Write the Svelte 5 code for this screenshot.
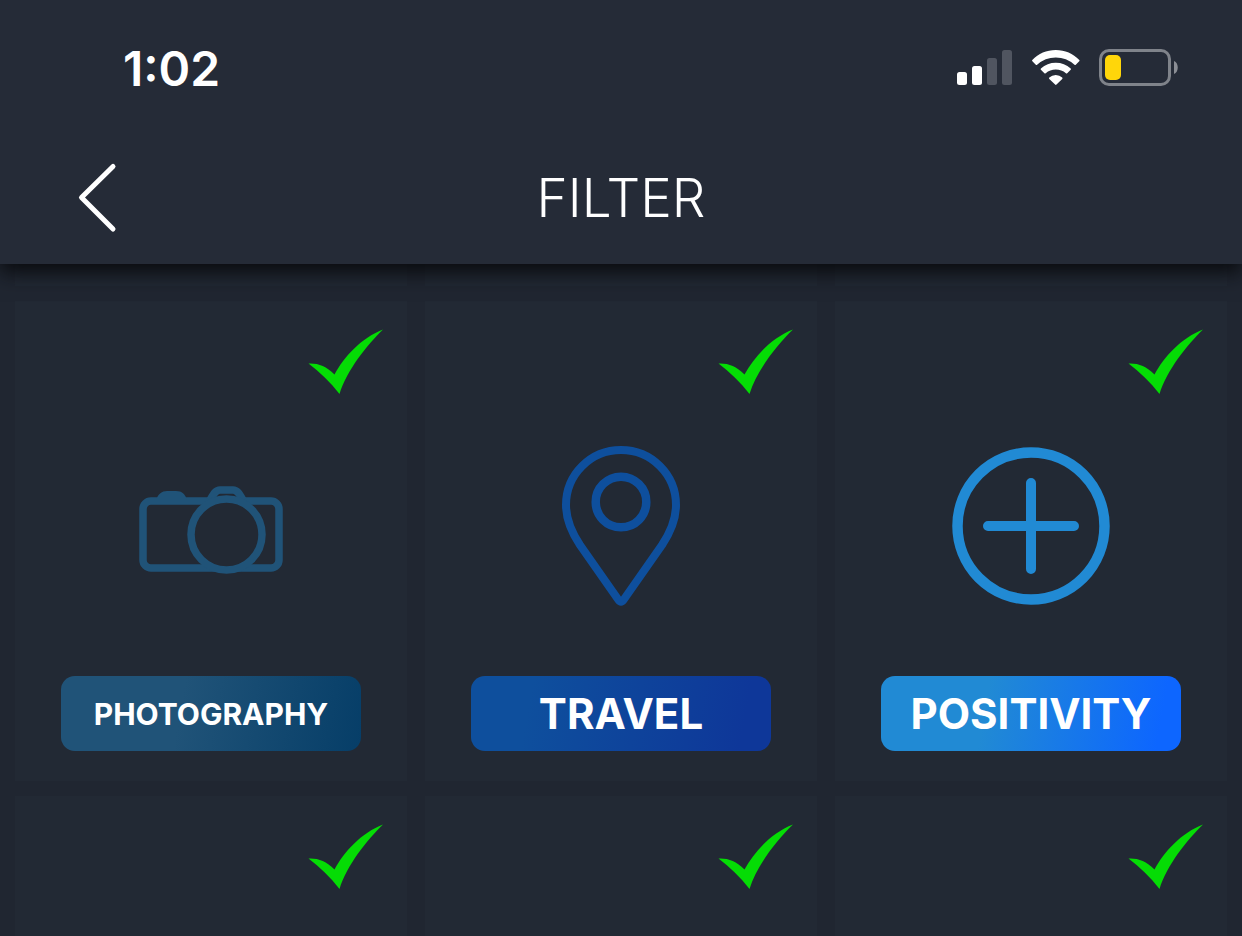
<script>
  const rows = [
    [
      { id: 'p1', tail: true },
      { id: 'p2', tail: true },
      { id: 'p3', tail: true }
    ],
    [
      { id: 'photography', label: 'PHOTOGRAPHY', checked: true },
      { id: 'travel', label: 'TRAVEL', checked: true },
      { id: 'positivity', label: 'POSITIVITY', checked: true }
    ],
    [
      { id: 'n1', checked: true },
      { id: 'n2', checked: true },
      { id: 'n3', checked: true }
    ]
  ];
  let cards = $state(rows.flat());
</script>

<div class="screen">
  <header>
    <div class="status">
      <time>1:02</time>
      <div class="indicators">
        <svg width="56" height="36" viewBox="0 0 56 36" aria-hidden="true">
          <rect x="0" y="22" width="10" height="13" rx="2.5" fill="#fff" />
          <rect x="15" y="16" width="10" height="19" rx="2.5" fill="#fff" />
          <rect x="30" y="8" width="10" height="27" rx="2.5" fill="#505560" />
          <rect x="45" y="0" width="10" height="35" rx="2.5" fill="#505560" />
        </svg>
        <svg width="48" height="36" viewBox="0 0 48 36" aria-hidden="true">
          <g fill="#fff">
            <path d="M0.3 10.1 C6.500 3.500 14.500 0 23.800 0 C33 0 41 3.500 47.300 10.100 Q47.800 10.700 47.200 11.300 L43.800 14.800 Q43.200 15.400 42.500 14.700 Q34.500 7.400 23.800 7.400 Q13 7.400 5.100 14.700 Q4.400 15.400 3.800 14.800 L.4 11.300 Q-.2 10.700 .3 10.1Z" />
            <path d="M8.9 18.4 Q15.2 12.7 23.8 12.7 Q32.4 12.7 38.7 18.4 Q39.3 19 38.7 19.7 L35.2 23.2 Q34.6 23.8 33.9 23.2 Q29.6 19.6 23.8 19.6 Q18 19.6 13.7 23.2 Q13 23.8 12.4 23.2 L8.9 19.7 Q8.3 19 8.9 18.4Z" />
            <path d="M17.3 27.6 Q20 24.9 23.8 24.9 Q27.6 24.9 30.2 27.6 Q30.9 28.3 30.2 28.9 L24.5 34.6 Q23.8 35.2 23.1 34.6 L17.3 28.9 Q16.6 28.3 17.3 27.6Z" />
          </g>
        </svg>
        <svg width="80" height="38" viewBox="0 0 80 38" aria-hidden="true">
          <rect x="1.5" y="1.5" width="69" height="34" rx="8.5" fill="none" stroke="#7f838a" stroke-width="3" />
          <rect x="6" y="6" width="16" height="25" rx="5" fill="#ffd60a" />
          <path d="M75 12 C80 14 80 23 75 25Z" fill="#8b8e95" />
        </svg>
      </div>
    </div>
    <div class="bar">
      <button class="back" aria-label="Back">
        <svg width="40" height="72" viewBox="0 0 40 72" aria-hidden="true">
          <path d="M36 4.5 L4.500 35.5 L36 67" fill="none" stroke="#fff" stroke-width="5" stroke-linecap="round" stroke-linejoin="round" />
        </svg>
      </button>
      <h1>FILTER</h1>
    </div>
  </header>

  <main>
    {#each cards as card (card.id)}
      {#if card.tail}
        <div class="tail"></div>
      {:else}
        <button class="card" aria-pressed={!!card.checked} onclick={() => (card.checked = !card.checked)}>
          <svg class="check" class:hidden={!card.checked} width="76" height="66" viewBox="0 0 76 66" aria-hidden="true">
            <path d="M0.5 34.5 C10 34 18 37 26.500 45.500 C36 28 53 9 75 .5 C59 16 39 41 31.500 65 C22 53 12 43 .5 34.5Z" fill="#05dc05" />
          </svg>
          <span class="art">
            {#if card.id === 'photography'}
              <svg width="144" height="160" viewBox="0 0 144 160" aria-hidden="true">
                <g fill="none" stroke="#205378" stroke-width="7.5">
                  <rect x="4" y="55" width="136" height="67" rx="8" />
                  <path d="M71 54 C75 47 77 44 81 44 H94 C98 44 100 47 104 54" />
                  <circle cx="87.5" cy="88.5" r="35.5" fill="#222934" />
                </g>
                <path d="M17 54 C19 48 23 45 28 45 H37 C43 45 46 48 48 54Z" fill="#205378" />
              </svg>
            {:else if card.id === 'travel'}
              <svg width="118" height="160" viewBox="0 0 118 160" aria-hidden="true">
                <g fill="none" stroke="#0e4f9d" stroke-width="8" stroke-linejoin="round">
                  <path d="M59 4 C28.5 4 4 28.5 4 59 C4 75 10 87 18 99 L56.5 154 Q59 157.5 61.5 154 L100 99 C108 87 114 75 114 59 C114 28.5 89.5 4 59 4Z" />
                  <circle cx="59" cy="56" r="25.3" stroke-width="8.5" />
                </g>
              </svg>
            {:else if card.id === 'positivity'}
              <svg width="158" height="160" viewBox="0 0 158 160" aria-hidden="true">
                <g fill="none" stroke="#218ad4" stroke-linecap="round">
                  <circle cx="79" cy="80" r="73.5" stroke-width="10.5" />
                  <path d="M36 80 H122 M79 37 V123" stroke-width="10" />
                </g>
              </svg>
            {/if}
          </span>
          {#if card.label}
            <span class="label {card.id}">{card.label}</span>
          {/if}
        </button>
      {/if}
    {/each}
  </main>
</div>

<style>
  :global(body) {
    margin: 0;
    background: #202631;
  }
  .screen {
    height: 100vh;
    display: flex;
    flex-direction: column;
    overflow: hidden;
    color: #fff;
    font-family: Inter, "Liberation Sans", sans-serif;
  }
  header {
    position: relative;
    z-index: 1;
    flex: none;
    background: #252b37;
    box-shadow: 0 8px 20px #08090c;
  }
  .status {
    display: flex;
    justify-content: space-between;
    align-items: center;
    height: 132px;
    padding: 4px 63px 0 123px;
    box-sizing: border-box;
  }
  time {
    font-size: 48px;
    font-weight: 600;
  }
  .indicators {
    display: flex;
    align-items: center;
    gap: 19px;
  }
  .bar {
    display: grid;
    grid-template-columns: 1fr auto 1fr;
    align-items: center;
    height: 132px;
    padding: 0 77px;
  }
  .back {
    justify-self: start;
    display: flex;
    padding: 0;
    border: 0;
    background: none;
    cursor: pointer;
  }
  h1 {
    margin: 0;
    font-size: 53px;
    font-weight: 300;
  }
  main {
    flex: 1;
    min-height: 0;
    overflow: hidden;
    display: grid;
    grid-template-columns: repeat(3, 1fr);
    grid-template-rows: 22px 480px 480px;
    gap: 15px 18px;
    padding: 0 15px;
  }
  .card,
  .tail {
    background: #222934;
  }
  .card {
    display: flex;
    flex-direction: column;
    align-items: center;
    padding: 28px 23px 30px;
    border: 0;
    overflow: hidden;
    color: inherit;
    font: inherit;
    cursor: pointer;
  }
  .check {
    align-self: flex-end;
    flex: none;
  }
  .hidden {
    visibility: hidden;
  }
  .art {
    flex: 1;
    display: flex;
    align-items: center;
    padding-bottom: 20px;
  }
  .label {
    display: flex;
    align-items: center;
    justify-content: center;
    width: 300px;
    max-width: 100%;
    height: 75px;
    border-radius: 14px;
    font-size: 42px;
    font-weight: 700;
  }
  .photography {
    font-size: 30px;
    background: linear-gradient(100deg, #205378 40%, #063e68);
  }
  .travel {
    background: linear-gradient(100deg, #0e4f9d 20%, #0e3799 90%);
  }
  .positivity {
    background: linear-gradient(100deg, #218ad4 35%, #0d66ff 92%);
  }
</style>
